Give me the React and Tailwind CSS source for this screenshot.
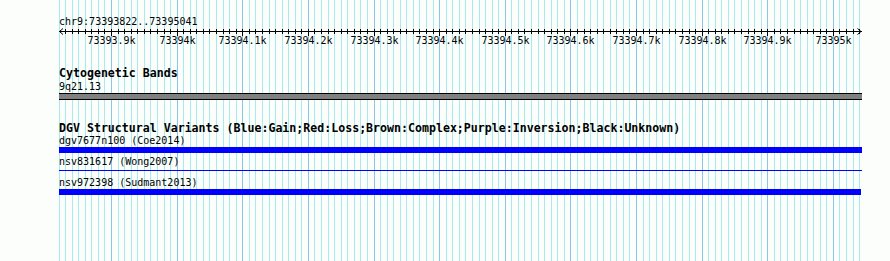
const START = 73393822;
const END = 73395041;
const X0 = 111; // x of 73393900 on the page
const STEP = 6.5625; // 10 bp
const LEFT = 59;

function Grid() {
  const lines = [];
  for (let k = -8; k <= 114; k++) {
    const x = Math.round(X0 + k * STEP) + 0.5;
    const major = k % 10 === 0;
    lines.push(
      <line key={k} x1={x} x2={x} y1={0} y2={261} stroke={major ? "#88c6ea" : "#a8eaf0"} strokeWidth={1} />
    );
  }
  return (
    <svg className="absolute left-0 top-0" width="890" height="261">
      {lines}
    </svg>
  );
}

function Ruler() {
  const ticks = [];
  const labels = [];
  for (let k = -7; k <= 114; k++) {
    const x = Math.round(X0 + k * STEP) - LEFT + 0.5;
    const major = k % 10 === 0;
    ticks.push(<line key={k} x1={x} x2={x} y1={1} y2={major ? 8 : 6} stroke="#000" strokeWidth={1} />);
    if (major) {
      const kb = (73393900 + k * 10) / 1000;
      const text = Number.isInteger(kb) ? `${kb}k` : `${kb.toFixed(1)}k`;
      labels.push(
        <text key={"l" + k} x={x} y={16} textAnchor="middle" fontSize="10" fontFamily="'DejaVu Sans Mono', monospace" fill="#000">
          {text}
        </text>
      );
    }
  }
  return (
    <svg width="803" height="18" className="block mt-[1px]">
      <line x1={0} x2={803} y1={3.5} y2={3.5} stroke="#000" strokeWidth={1} />
      <polyline points="4,0.5 0.5,3.5 4,6.5" fill="none" stroke="#000" strokeWidth={1} />
      <polyline points="798.5,0.5 802,3.5 798.5,6.5" fill="none" stroke="#000" strokeWidth={1} />
      {ticks}
      {labels}
    </svg>
  );
}

export default function App() {
  const bold = "font-bold text-[11.6px] leading-[13px] whitespace-pre";
  const small = "text-[10px] leading-[11px] whitespace-pre";

  return (
    <div className="relative w-[890px] h-[261px] overflow-hidden bg-[#fbfefb] text-black" style={{ fontFamily: "'DejaVu Sans Mono', 'Liberation Mono', monospace" }}>
      <Grid />
      <div className="relative ml-[59px] w-[803px] flex flex-col">
        <div className={`${small} mt-[16px]`}>chr9:{START}..{END}</div>
        <Ruler />

        <div className={`${bold} mt-[21px]`}>Cytogenetic Bands</div>
        <div className={`${small} mt-[1px]`}>9q21.13</div>
        <div className="h-[7px] w-[803px] mt-[1px] bg-[#808080] border-y border-black" />

        <div className={`${bold} mt-[22px]`}>DGV Structural Variants (Blue:Gain;Red:Loss;Brown:Complex;Purple:Inversion;Black:Unknown)</div>
        <div className={small}>dgv7677n100 (Coe2014)</div>
        <div className="h-[6px] w-[803px] mt-[1px] bg-[#0000ff]" />

        <div className={`${small} mt-[3px]`}>nsv831617 (Wong2007)</div>
        <div className="h-[1px] w-[803px] bg-[#0000ff] mt-[3px]" />

        <div className={`${small} mt-[6px]`}>nsv972398 (Sudmant2013)</div>
        <div className="h-[6px] w-[802px] mt-[1px] bg-[#0000ff]" />
      </div>
    </div>
  );
}
